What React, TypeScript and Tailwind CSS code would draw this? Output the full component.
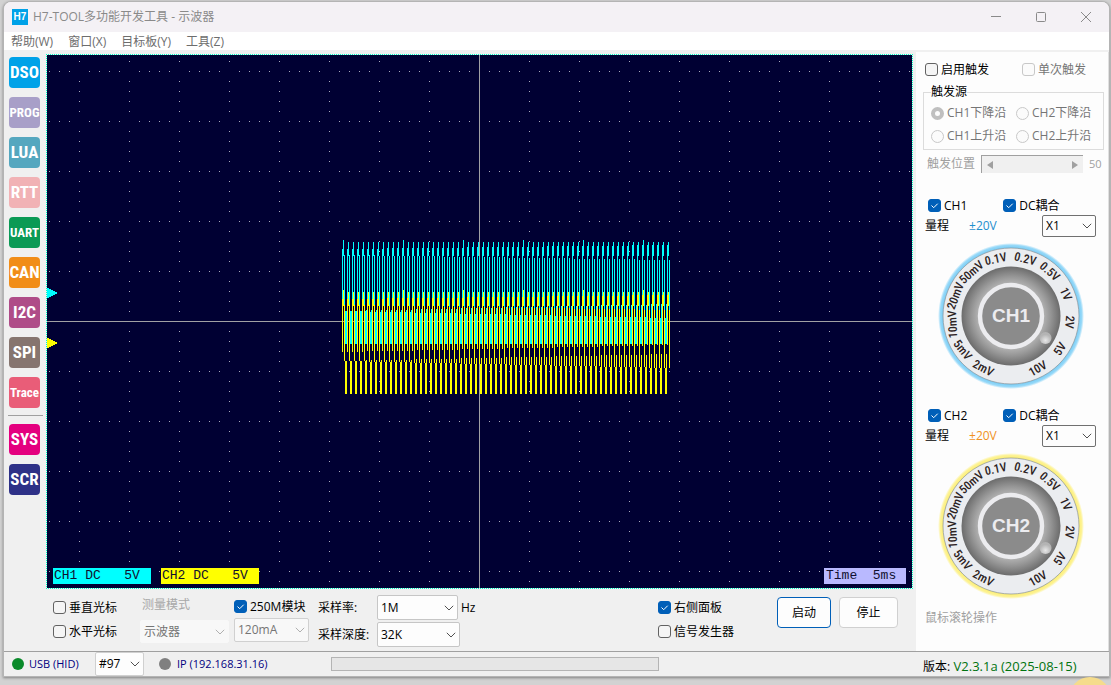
import { useId, useState } from "react";
import type { ReactNode } from "react";

const tools = [
  { label: "DSO", color: "bg-[#00a2e8]", size: "text-[17px]" },
  { label: "PROG", color: "bg-[#a89fc8]", size: "text-[13px]" },
  { label: "LUA", color: "bg-[#55a7bf]", size: "text-[17px]" },
  { label: "RTT", color: "bg-[#f1b2b5]", size: "text-[17px]" },
  { label: "UART", color: "bg-[#0b9a55]", size: "text-[13px]" },
  { label: "CAN", color: "bg-[#f18d18]", size: "text-[17px]" },
  { label: "I2C", color: "bg-[#af4c88]", size: "text-[17px]" },
  { label: "SPI", color: "bg-[#86756f]", size: "text-[17px]" },
  { label: "Trace", color: "bg-[#e95d78]", size: "text-[13px]" },
];

const systemTools = [
  { label: "SYS", color: "bg-[#e4007f]", size: "text-[17px]" },
  { label: "SCR", color: "bg-[#2e3187]", size: "text-[17px]" },
];

// position on the dial (degrees from the top) and rotation of the text
const dialMarks = [
  { text: "2mV", at: 208, turn: 28 },
  { text: "5mV", at: 235, turn: 52 },
  { text: "10mV", at: 262, turn: -93 },
  { text: "20mV", at: 290, turn: -69 },
  { text: "50mV", at: 318, turn: -42 },
  { text: "0.1V", at: 345, turn: -12 },
  { text: "0.2V", at: 14, turn: 14 },
  { text: "0.5V", at: 41, turn: 41 },
  { text: "1V", at: 68, turn: 66 },
  { text: "2V", at: 96, turn: 96 },
  { text: "5V", at: 124, turn: -56 },
  { text: "10V", at: 153, turn: -30 },
];

interface CheckProps {
  label: string;
  checked?: boolean;
  disabled?: boolean;
}

function Check({ label, checked = false, disabled = false }: CheckProps) {
  const [on, setOn] = useState(checked);
  return (
    <label className={`flex items-center gap-[3px] whitespace-nowrap ${disabled ? "text-[#757575]" : ""}`}>
      <span className="grid size-[13px] shrink-0">
        <input
          type="checkbox"
          checked={on}
          disabled={disabled}
          onChange={() => setOn(!on)}
          className="col-start-1 row-start-1 size-[13px] appearance-none rounded-[3px] border border-[#626262] bg-[#f5f5f5] checked:border-[#005fb8] checked:bg-[#005fb8] disabled:border-[#c8c8c8] disabled:bg-[#fbfbfb]"
        />
        {on && (
          <svg viewBox="0 0 13 13" className="pointer-events-none col-start-1 row-start-1 size-[13px]" fill="none" stroke="white">
            <path d="M3.5 6.5 5.7 8.7 9.7 4.7" />
          </svg>
        )}
      </span>
      <span className="pt-px">{label}</span>
    </label>
  );
}

interface RadioProps {
  label: string;
  checked?: boolean;
}

function Radio({ label, checked = false }: RadioProps) {
  return (
    <label className="flex items-center gap-[3px] whitespace-nowrap text-[#757575]">
      <input
        type="radio"
        name="trigger"
        defaultChecked={checked}
        disabled
        className="size-[13px] shrink-0 appearance-none rounded-full border border-[#c8c8c8] bg-[#fbfbfb] checked:border-4 checked:border-[#bfbfbf]"
      />
      {label}
    </label>
  );
}

interface SelectProps {
  label: string;
  value: string;
  width: string;
  look?: string;
  disabled?: boolean;
}

function Select({ label, value, width, look = "h-[25px] border-[#c6c6c6]", disabled = false }: SelectProps) {
  return (
    <span className={`grid shrink-0 items-center ${width}`}>
      <select
        aria-label={label}
        disabled={disabled}
        className={`col-start-1 row-start-1 w-full appearance-none rounded-[2px] border bg-[#fdfdfd] px-[3px] disabled:bg-[#f8f8f8] disabled:text-[#757575] disabled:opacity-100 ${look}`}
      >
        <option>{value}</option>
      </select>
      <svg
        viewBox="0 0 10 6"
        className={`pointer-events-none col-start-1 row-start-1 mr-1 h-[6px] w-[10px] justify-self-end ${disabled ? "text-[#b0b0b0]" : "text-[#505050]"}`}
        fill="none"
        stroke="currentColor"
      >
        <path d="M.8 .8 5 5 9.2 .8" />
      </svg>
    </span>
  );
}

function ToolButton({ label, color, size }: { label: string; color: string; size: string }) {
  return (
    <button
      className={`flex size-[31px] items-center justify-center rounded-[4px] font-['Liberation_Sans_Narrow','Roboto_Condensed','Liberation_Sans',sans-serif] font-bold leading-none text-white ${color} ${size}`}
    >
      {label}
    </button>
  );
}

// one screen column per sample, the signal repeats every 5 px
function buildTrace(top: number) {
  let d = "";
  for (let i = 0; i < 328; i++) {
    const drift = i / 328;
    const rise = Math.round(7 * drift);
    const spans = [
      [7 - Math.round(4 * drift), 60 - rise],
      [0, 14],
      [13 + Math.round(5 * drift), 69 + rise],
      [69 + rise, 102],
      [69 - rise, 102],
    ];
    const [a, b] = spans[i % 5];
    const lift = i % 60 === 1 ? 2 : 0;
    d += `M${i + 0.5} ${top + a - lift}V${top + b}`;
  }
  return d;
}

function Scope() {
  return (
    <div className="relative min-h-[400px] flex-1 border border-dotted border-[#00ffc8] bg-[#000033] bg-clip-padding">
      <svg className="absolute inset-0 size-full" shapeRendering="crispEdges">
        <defs>
          {/* no dot where a row and a column cross */}
          <pattern id="grid" x="32" y="16" width="50" height="50" patternUnits="userSpaceOnUse">
            <path d="M10 .5h1M20 .5h1M30 .5h1M40 .5h1M0 10.5h1M0 20.5h1M0 30.5h1M0 40.5h1" stroke="#a9a9bd" />
          </pattern>
        </defs>
        <rect width="100%" height="100%" fill="url(#grid)" />
        <svg x="50%" y="50%" overflow="visible">
          <path d="M-1000 -.5H1000M-.5 -1000V1000" stroke="#a0a0a4" />
          <g transform="translate(-138 -80)">
            <path d={buildTrace(0)} stroke="#00ffff" />
            <path d={buildTrace(50)} stroke="#ffff00" />
          </g>
          <path d="M-433 -34V-23L-422 -28.5Z" fill="#00ffff" />
          <path d="M-433 16V27L-422 21.5Z" fill="#ffff00" />
        </svg>
      </svg>
      <div className="absolute inset-x-[6px] bottom-1 flex gap-[10px] whitespace-pre font-['Liberation_Mono',monospace] text-[13px] leading-4 text-[#101030]">
        <span className="w-[98px] bg-[#00ffff] pl-px">CH1 DC   5V</span>
        <span className="w-[98px] bg-[#ffff00] pl-px">CH2 DC   5V</span>
        <span className="ml-auto w-[82px] bg-[#b9b9ff] pl-[2px]">Time  5ms</span>
      </div>
    </div>
  );
}

function Dial({ name, glow }: { name: string; glow: string }) {
  const id = useId();
  return (
    <svg viewBox="-74 -74 148 148" className="size-[148px]" role="img" aria-label={`${name} 量程旋钮`}>
      <defs>
        <radialGradient id={`${id}g`}>
          <stop offset="0.94" stopColor={glow} />
          <stop offset="0.97" stopColor={glow} stopOpacity="0.8" />
          <stop offset="1" stopColor={glow} stopOpacity="0" />
        </radialGradient>
        <radialGradient id={`${id}b`}>
          <stop offset="0.62" stopColor="#b9b9b9" />
          <stop offset="0.8" stopColor="#969696" />
          <stop offset="1" stopColor="#6c6c6c" />
        </radialGradient>
        <radialGradient id={`${id}k`} cx="0.5" cy="0.7">
          <stop offset="0" stopColor="#e8e8e8" />
          <stop offset="1" stopColor="#b4b4b4" />
        </radialGradient>
      </defs>
      <circle r="73" fill={`url(#${id}g)`} />
      <circle r="68" fill="#ebedf0" stroke="#8a9298" strokeWidth="0.7" />
      <circle r="49.5" fill={`url(#${id}b)`} />
      <circle r="31" fill="#8b8b8b" stroke="#ececef" strokeWidth="4.4" />
      <circle cx="34.5" cy="22" r="6" fill={`url(#${id}k)`} />
      <text y="6" textAnchor="middle" className="fill-[#ececef] font-['Liberation_Sans',sans-serif] text-[19px] font-bold">
        {name}
      </text>
      {dialMarks.map((mark) => {
        const rad = (mark.at * Math.PI) / 180;
        return (
          <text
            key={mark.text}
            transform={`translate(${59 * Math.sin(rad)} ${-59 * Math.cos(rad)}) rotate(${mark.turn})`}
            y="4"
            textAnchor="middle"
            className="fill-[#2b2222] font-['Liberation_Sans_Narrow','Roboto_Condensed','Liberation_Sans',sans-serif] text-[12px] font-medium"
          >
            {mark.text}
          </text>
        );
      })}
    </svg>
  );
}

interface ChannelProps {
  name: string;
  tint: string;
  glow: string;
}

function Channel({ name, tint, glow }: ChannelProps) {
  return (
    <section>
      <div className="flex h-4 items-center gap-9 pl-1">
        <Check label={name} checked />
        <Check label="DC耦合" checked />
      </div>
      <div className="mt-px flex h-6 items-center pl-px">
        <span>量程</span>
        <span className={`ml-5 ${tint}`}>±20V</span>
        <span className="ml-auto pr-[6px]">
          <Select label={`${name} 探头`} value="X1" width="w-[54px]" look="h-[22px] border-[#707070]" />
        </span>
      </div>
      <div className="mt-1 flex justify-center pr-1">
        <Dial name={name} glow={glow} />
      </div>
    </section>
  );
}

function RightPanel() {
  return (
    <aside className="w-[193px] shrink-0 border-r border-[#e0e0e0] bg-[#fdfdfd] pl-2 pr-[6px] pt-[9px]">
      <div className="flex h-4 items-center gap-[33px] pl-px">
        <Check label="启用触发" />
        <Check label="单次触发" disabled />
      </div>
      <fieldset className="-ml-px -mr-[2px] mt-[7px] h-[66px] border border-[#dcdcdc] pl-[7px]">
        <legend className="leading-4">触发源</legend>
        <div className="mt-[5px] grid grid-cols-[85px_85px] gap-y-[7px] leading-4">
          <Radio label="CH1下降沿" checked />
          <Radio label="CH2下降沿" />
          <Radio label="CH1上升沿" />
          <Radio label="CH2上升沿" />
        </div>
      </fieldset>
      <div className="mt-[5px] flex items-center pl-[3px] text-[#a0a0a0]">
        <span className="w-[54px]">触发位置</span>
        <div className="flex h-[18px] w-[102px] items-center justify-between border-l border-t border-[#a0a0a0] bg-[#f0f0f0] px-[5px]">
          <svg viewBox="0 0 6 8" className="h-2 w-[6px] fill-[#a0a0a0]">
            <path d="M6 0V8L0 4Z" />
          </svg>
          <svg viewBox="0 0 6 8" className="h-2 w-[6px] fill-[#a0a0a0]">
            <path d="M0 0V8L6 4Z" />
          </svg>
        </div>
        <span className="ml-[6px] text-[11px]">50</span>
      </div>
      <div className="mt-6 flex flex-col gap-[17px]">
        <Channel name="CH1" tint="text-[#1f8fce]" glow="#7fd0f7" />
        <Channel name="CH2" tint="text-[#f0921e]" glow="#fdf07c" />
      </div>
      <p className="mt-[10px] pl-px text-[#a0a0a0]">鼠标滚轮操作</p>
    </aside>
  );
}

function Stack({ children }: { children: ReactNode }) {
  return <div className="flex flex-col gap-[9px] leading-[14px]">{children}</div>;
}

function Controls() {
  return (
    <div className="flex h-[62px] shrink-0 items-start pl-[7px] pt-[6px]">
      <div className="w-[87px] pt-[5px]">
        <Stack>
          <Check label="垂直光标" />
          <Check label="水平光标" />
        </Stack>
      </div>
      <div className="flex w-[94px] flex-col gap-[7px] pt-[2px]">
        <span className="pl-[2px] leading-4 text-[#a8a8a8]">测量模式</span>
        <Select label="测量模式" value="示波器" width="w-[89px]" look="h-[23px] border-[#f8f8f8]" disabled />
      </div>
      <div className="flex w-[84px] flex-col gap-1 pt-[3px]">
        <div className="flex h-4 items-center">
          <Check label="250M模块" checked />
        </div>
        <Select label="电流" value="120mA" width="w-[75px]" look="h-6 border-[#d0d0d0]" disabled />
      </div>
      <div className="grid grid-cols-[59px_1fr] items-center gap-y-[2px]">
        <span>采样率:</span>
        <span className="flex items-center gap-[3px]">
          <Select label="采样率" value="1M" width="w-[81px]" />
          Hz
        </span>
        <span>采样深度:</span>
        <Select label="采样深度" value="32K" width="w-[83px]" />
      </div>
      <div className="ml-auto mr-[43px] pt-[5px]">
        <Stack>
          <Check label="右侧面板" checked />
          <Check label="信号发生器" />
        </Stack>
      </div>
      <div className="flex gap-2 pr-[18px] pt-[2px]">
        <button className="h-[31px] w-[54px] rounded-[4px] border border-[#005fb8] bg-[#fdfdfd]">启动</button>
        <button className="h-[31px] w-[59px] rounded-[4px] border border-[#d0d0d0] bg-[#fdfdfd]">停止</button>
      </div>
    </div>
  );
}

export default function App() {
  return (
    <div className="relative flex min-h-screen flex-col overflow-hidden bg-[#d2d2d2] pb-2 pl-[3px] pr-px pt-px font-['Open_Sans','Noto_Sans_CJK_SC',sans-serif] text-[12px] leading-4 text-black">
      <div className="flex flex-1 flex-col overflow-hidden rounded-t-lg border border-[#b4b4b4] bg-[#f0f0f0] shadow-[0_1px_3px_#808080]">
        <header className="flex h-[30px] shrink-0 items-center bg-[#f4f1f5] pl-2 text-[#8a8a8a]">
          <span className="mr-[5px] flex size-4 items-center justify-center bg-[#00a2e8] font-['Liberation_Sans',sans-serif] text-[10px] font-bold text-white">
            H7
          </span>
          <h1>H7-TOOL多功能开发工具 - 示波器</h1>
          <div className="ml-auto flex gap-[35px] pr-[18px]">
            <button aria-label="最小化">
              <svg viewBox="0 0 10 10" className="size-[10px]" fill="none" stroke="#8a8a8a">
                <path d="M0 4.5H10" />
              </svg>
            </button>
            <button aria-label="最大化">
              <svg viewBox="0 0 10 10" className="size-[10px]" fill="none" stroke="#8a8a8a">
                <rect x=".5" y=".5" width="9" height="9" rx="1" />
              </svg>
            </button>
            <button aria-label="关闭">
              <svg viewBox="0 0 10 10" className="size-[10px]" fill="none" stroke="#8a8a8a">
                <path d="M0 0 10 10M10 0 0 10" />
              </svg>
            </button>
          </div>
        </header>
        <nav className="flex h-[18px] shrink-0 items-end gap-[15px] bg-white pl-[7px] text-[#6d6d6d]">
          <button>帮助(W)</button>
          <button>窗口(X)</button>
          <button>目标板(Y)</button>
          <button>工具(Z)</button>
        </nav>
        <div className="flex flex-1 pt-[2px]">
          <div className="flex w-[42px] shrink-0 flex-col gap-[9px] pl-[5px] pt-[5px]">
            {tools.map((tool) => (
              <ToolButton key={tool.label} {...tool} />
            ))}
            <hr className="-mb-px -ml-px -mt-[2px] w-[35px] border-[#a0a0a0]" />
            {systemTools.map((tool) => (
              <ToolButton key={tool.label} {...tool} />
            ))}
          </div>
          <main className="flex min-w-0 flex-1 flex-col pt-[2px]">
            <div className="flex flex-1 flex-col pr-[3px]">
              <Scope />
            </div>
            <Controls />
          </main>
          <RightPanel />
        </div>
        <footer className="flex h-[25px] shrink-0 items-center border-t border-[#a0a0a0] pl-2 text-[11px] text-[#000080]">
          <span className="mr-[5px] size-3 rounded-full bg-[#0a8a2a]" />
          <span className="w-[66px]">USB (HID)</span>
          <Select label="设备编号" value="#97" width="w-[49px] text-black text-[12px]" look="h-6 border-[#d0d0d0]" />
          <span className="ml-[15px] mr-[6px] size-3 rounded-full bg-[#808080]" />
          <span className="w-[154px]">IP (192.168.31.16)</span>
          <div role="progressbar" aria-label="进度" className="h-[14px] w-[328px] border border-[#b4b4b4] bg-[#e6e6e6]" />
          <p className="ml-auto w-[186px] whitespace-nowrap pt-1 text-[13px] text-[#00730f]">
            <span className="text-[12px] text-black">版本:</span> V2.3.1a (2025-08-15)
          </p>
        </footer>
      </div>
      <div className="absolute -bottom-[34px] right-0 size-[42px] rounded-full bg-[#f5dc8c]" />
    </div>
  );
}
